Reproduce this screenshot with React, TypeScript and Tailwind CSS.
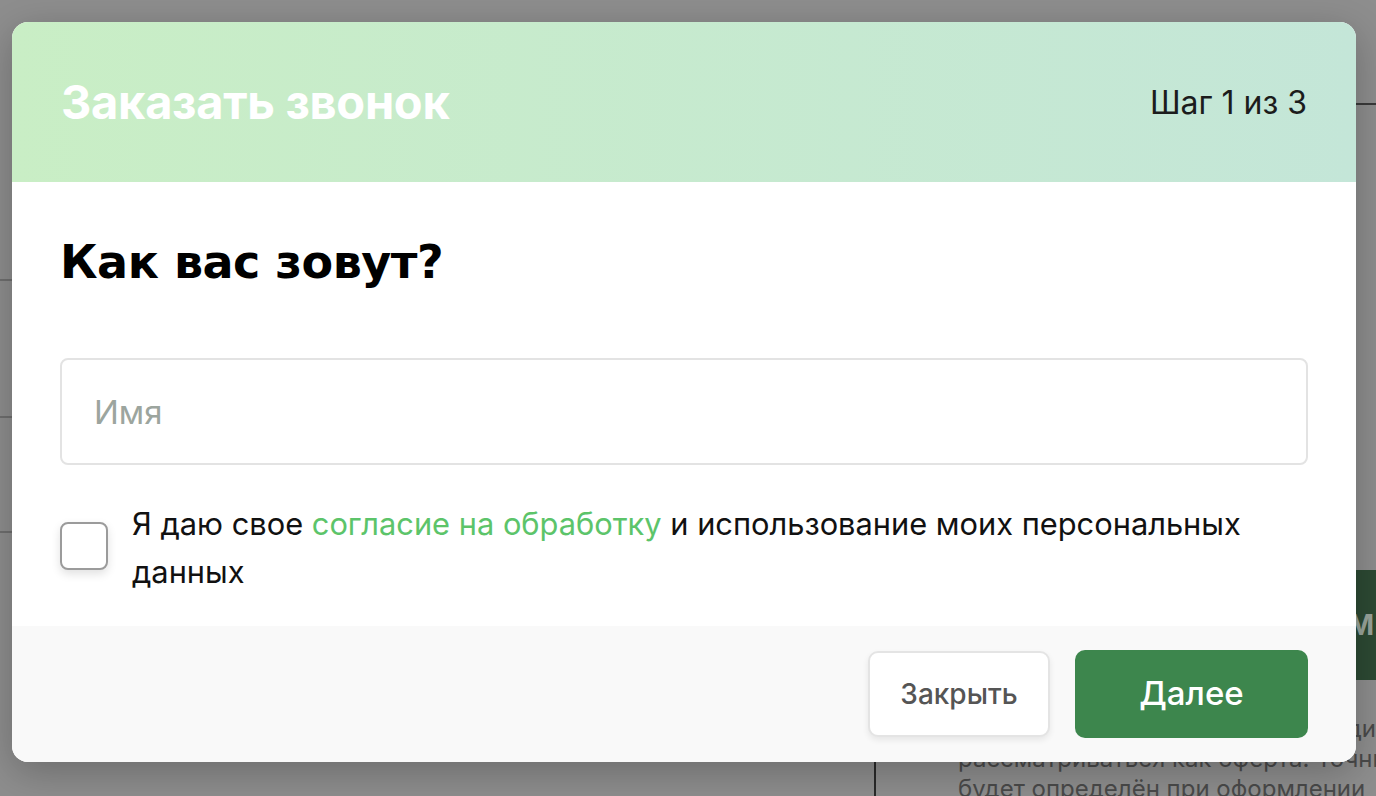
import { useState } from "react";

const Backdrop = () => (
  <div className="grid h-screen grid-cols-[876px_1fr] overflow-hidden bg-[#8e8e8e]">
    <div className="flex flex-col">
      <div className="h-[279px]" />
      <div className="h-[2px] w-[14px] bg-[#6f6f6f]" />
      <div className="h-[135px]" />
      <div className="h-[2px] w-[14px] bg-[#6f6f6f]" />
      <div className="h-[113px]" />
      <div className="h-[2px] w-[14px] bg-[#6f6f6f]" />
      <div className="mt-auto h-[120px] w-[2px] self-end bg-[#2a2a2a]" />
    </div>
    <div className="flex min-w-0 flex-col">
      <div className="h-[103px]" />
      <div className="h-[2px] bg-[#3a3a3a]" />
      <div className="h-[465px]" />
      <div className="flex h-[110px] items-center justify-end bg-[#2d4a34] pr-[2px] text-[28px] font-bold text-[#9aa59c]">
        <span>ОМ</span>
      </div>
      <div className="flex flex-col overflow-hidden whitespace-nowrap pl-[82px] pt-[34px] text-[24px] leading-[30px] text-[#4a4a4a]">
        <span className="text-right">ди</span>
        <span>рассматриваться как оферта. Точный</span>
        <span>будет определён при оформлении</span>
      </div>
    </div>
  </div>
);

export default function App() {
  const [name, setName] = useState("");
  const [agree, setAgree] = useState(false);

  return (
    <div className="relative h-screen w-full font-['Inter',sans-serif]">
      <Backdrop />

      <div className="absolute inset-0 pl-[12px] pt-[22px]">
        <div className="flex h-[740px] w-[1344px] flex-col overflow-hidden rounded-[16px] bg-white shadow-[0_10px_40px_rgba(0,0,0,0.25)]">
          <div className="flex h-[160px] shrink-0 items-center justify-between bg-gradient-to-r from-[#c9eec5] to-[#c4e6d8] px-[49px]">
            <h1 className="text-[47px] font-bold tracking-[-0.3px] text-white">Заказать звонок</h1>
            <span className="pt-[2px] text-[32px] text-[#1c1c1c]">Шаг 1 из 3</span>
          </div>

          <div className="flex flex-1 flex-col px-[48px] pt-[52px]">
            <h2 className="font-['DejaVu_Sans',sans-serif] text-[46px] font-bold leading-[56px] tracking-[-0.5px] text-black">
              Как вас зовут?
            </h2>

            <input
              value={name}
              onChange={(e) => setName(e.target.value)}
              placeholder="Имя"
              className="mt-[68px] h-[107px] w-full rounded-[8px] border-2 border-[#e3e3e3] px-[32px] text-[33px] text-black outline-none placeholder:text-[#9ca59e]"
            />

            <label className="mt-[35px] flex items-start gap-[24px]">
              <button
                type="button"
                onClick={() => setAgree(!agree)}
                className="mt-[22px] h-[48px] w-[48px] shrink-0 rounded-[8px] border-2 border-[#9b9b9b] bg-white shadow-[0_4px_10px_rgba(0,0,0,0.12)]"
              />
              <span className="text-[30.8px] leading-[48px] text-[#111]">
                Я даю свое <span className="text-[#5cc46a]">согласие на обработку</span> и использование моих
                персональных данных
              </span>
            </label>
          </div>

          <div className="flex h-[136px] shrink-0 items-center justify-end gap-[25px] bg-[#f9f9f9] px-[48px]">
            <button className="h-[86px] w-[182px] rounded-[10px] border-2 border-[#e4e4e4] bg-white text-[28px] font-medium text-[#555] shadow-[0_3px_6px_rgba(0,0,0,0.08)]">
              Закрыть
            </button>
            <button className="h-[88px] w-[233px] rounded-[10px] bg-[#3d864d] text-[33px] font-medium text-white">
              Далее
            </button>
          </div>
        </div>
      </div>
    </div>
  );
}
